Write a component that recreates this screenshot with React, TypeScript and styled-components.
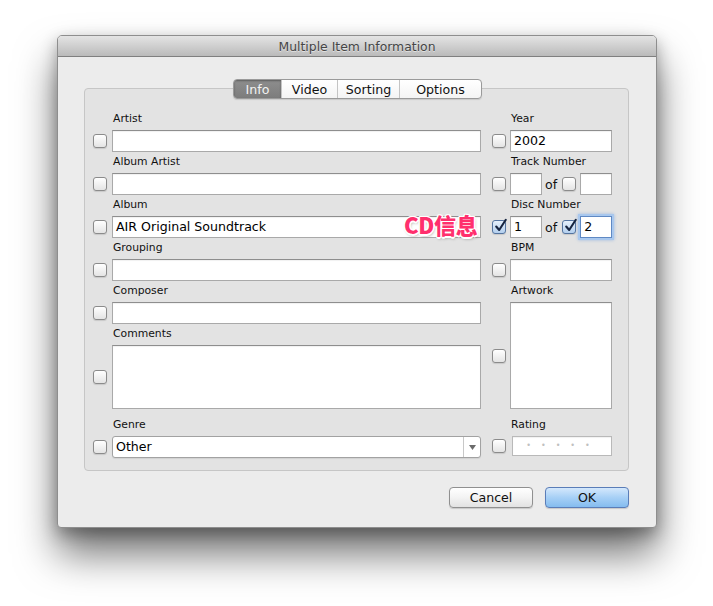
import React from "react";
import styled, { createGlobalStyle, css } from "styled-components";

const Global = createGlobalStyle`
  html, body { margin: 0; padding: 0; background: #ffffff; }
  body { font-family: "DejaVu Sans", "Liberation Sans", sans-serif; }
  * { box-sizing: border-box; }
`;

const Page = styled.div`
  width: 713px;
  height: 606px;
  padding: 35px 56px 0 57px;
  background: #ffffff;
`;

const Window = styled.div`
  width: 600px;
  height: 493px;
  display: flex;
  flex-direction: column;
  background: #ececec;
  border: 1px solid #8e8e8e;
  border-radius: 5px 5px 4px 4px;
  box-shadow: 0 26px 40px rgba(0, 0, 0, 0.55), 0 6px 16px rgba(0, 0, 0, 0.3);
`;

const TitleBar = styled.div`
  height: 21px;
  flex: none;
  border-bottom: 1px solid #7f7f7f;
  border-radius: 4px 4px 0 0;
  background: linear-gradient(#e4e4e4, #cdcdcd 55%, #bababa);
  color: #454545;
  font-size: 12.4px;
  line-height: 21px;
  text-align: center;
  text-shadow: 0 1px 0 rgba(255, 255, 255, 0.5);
`;

const Body = styled.div`
  flex: 1;
  display: flex;
  flex-direction: column;
  padding: 22px 27px 19px 26px;
`;

const TabRow = styled.div`
  display: flex;
  justify-content: center;
  position: relative;
  z-index: 1;
  height: 20px;
  padding-left: 2px;
`;

const Segmented = styled.div`
  display: flex;
  height: 20px;
  border: 1px solid #9a9a9a;
  border-radius: 4px;
  background: linear-gradient(#ffffff, #f4f4f4);
  box-shadow: 0 1px 1px rgba(0, 0, 0, 0.12);
  overflow: hidden;
`;

const Tab = styled.div<{ $w: number; $active?: boolean }>`
  width: ${(p) => p.$w}px;
  height: 100%;
  display: flex;
  align-items: center;
  justify-content: center;
  font-size: 12.6px;
  color: #111;
  border-left: 1px solid #c4c4c4;
  &:first-child { border-left: none; }
  ${(p) =>
    p.$active &&
    css`
      background: linear-gradient(#8e8e8e, #7c7c7c);
      color: #f2f2f2;
      box-shadow: inset 0 1px 2px rgba(0, 0, 0, 0.35);
      border-left: none;
    `}
`;

const Panel = styled.div`
  position: relative;
  margin-top: -11px;
  height: 383px;
  background: #e3e3e3;
  border: 1px solid #c6c6c6;
  border-radius: 4px;
  padding: 23px 15px 0 8px;
  display: flex;
  gap: 11px;
`;

const Column = styled.div<{ $w: number }>`
  width: ${(p) => p.$w}px;
  display: flex;
  flex-direction: column;
  gap: 3px;
`;

const Group = styled.div<{ $gap: number; $top?: number }>`
  display: grid;
  grid-template-columns: 14px 1fr;
  column-gap: ${(p) => p.$gap}px;
  row-gap: 4px;
  align-items: center;
  margin-top: ${(p) => p.$top ?? 0}px;
`;

const Label = styled.div`
  grid-column: 2;
  font-size: 10.8px;
  line-height: 14px;
  color: #111;
  padding-left: 1px;
`;

const Box = styled.div<{ $checked?: boolean }>`
  width: 14px;
  height: 14px;
  position: relative;
  border-radius: 3px;
  border: 1px solid #8b8b8b;
  background: linear-gradient(#ffffff, #e4e4e4);
  box-shadow: 0 1px 1px rgba(0, 0, 0, 0.12);
  ${(p) =>
    p.$checked &&
    css`
      border-color: #54749f;
      background: linear-gradient(#e6f0fb, #b3cfee);
    `}
`;

const CheckMark = styled.svg`
  position: absolute;
  left: 1px;
  top: -3px;
  width: 14px;
  height: 15px;
`;

const Checkbox = ({ checked }: { checked?: boolean }) => (
  <Box $checked={checked}>
    {checked && (
      <CheckMark viewBox="0 0 14 15">
        <path d="M2.2 8.5 L5.2 12 L11.8 1.8" fill="none" stroke="#16243f" strokeWidth="2.1" strokeLinecap="round" strokeLinejoin="round" />
      </CheckMark>
    )}
  </Box>
);

const Field = styled.div<{ $h?: number; $w?: number; $focus?: boolean; $ml?: number }>`
  height: ${(p) => p.$h ?? 22}px;
  width: ${(p) => (p.$w ? `${p.$w}px` : "auto")};
  margin-left: ${(p) => p.$ml ?? 0}px;
  background: #ffffff;
  border: 1px solid #a9a9a9;
  border-top-color: #8e8e8e;
  box-shadow: inset 0 1px 1px rgba(0, 0, 0, 0.06);
  font-size: 12.6px;
  line-height: 20px;
  color: #000;
  padding-left: 3px;
  white-space: nowrap;
  overflow: hidden;
  ${(p) =>
    p.$focus &&
    css`
      border: 1px solid #5f89c4;
      box-shadow: 0 0 0 2px #a9c8ee, 0 0 3px 2px rgba(110, 160, 225, 0.6);
    `}
`;

const Rating = styled(Field)`
  border-color: #b9b9b9;
  display: flex;
  align-items: center;
  justify-content: center;
  gap: 10px;
  color: #c0c0c0;
  font-size: 8px;
  padding: 0 8px 0 0;
`;

const Select = styled.div`
  height: 22px;
  display: flex;
  background: #ffffff;
  border: 1px solid #a2a2a2;
  border-radius: 3px;
  box-shadow: 0 1px 1px rgba(0, 0, 0, 0.08);
  font-size: 12.6px;
  line-height: 20px;
`;

const SelectValue = styled.div`
  flex: 1;
  padding-left: 3px;
`;

const SelectArrow = styled.div`
  width: 17px;
  border-left: 1px solid #c8c8c8;
  display: flex;
  align-items: center;
  justify-content: center;
`;

const Inline = styled.div`
  display: flex;
  align-items: center;
`;

const Of = styled.span`
  font-size: 12.6px;
  margin: 0 5px 0 3px;
  color: #111;
`;

const Annotation = styled.div`
  position: absolute;
  left: 319px;
  top: 121px;
  font-family: "Noto Sans CJK SC", "Noto Sans", sans-serif;
  font-weight: 900;
  font-size: 22px;
  line-height: 28px;
  letter-spacing: -0.3px;
  color: #ff2f6d;
  text-shadow: -1.5px 0 0 #fff, 1.5px 0 0 #fff, 0 -1.5px 0 #fff, 0 1.5px 0 #fff,
    -1px -1px 0 #fff, 1px 1px 0 #fff, -1px 1px 0 #fff, 1px -1px 0 #fff,
    1px 2px 3px rgba(0, 0, 0, 0.35);
`;

const Footer = styled.div`
  display: flex;
  justify-content: flex-end;
  gap: 12px;
  margin-top: 16px;
`;

const Button = styled.div<{ $primary?: boolean }>`
  width: 84px;
  height: 21px;
  border-radius: 4px;
  border: 1px solid #909090;
  background: linear-gradient(#ffffff, #f3f3f3 50%, #e2e2e2);
  box-shadow: 0 1px 1px rgba(0, 0, 0, 0.15);
  display: flex;
  align-items: center;
  justify-content: center;
  font-size: 12.6px;
  color: #111;
  ${(p) =>
    p.$primary &&
    css`
      border-color: #5a7db8;
      background: linear-gradient(#d4e8fc, #a7d0f6 50%, #84bcef);
    `}
`;

export default function App() {
  return (
    <>
      <Global />
      <Page>
        <Window>
          <TitleBar>Multiple Item Information</TitleBar>
          <Body>
            <TabRow>
              <Segmented>
                <Tab $w={47} $active>Info</Tab>
                <Tab $w={56}>Video</Tab>
                <Tab $w={62}>Sorting</Tab>
                <Tab $w={82}>Options</Tab>
              </Segmented>
            </TabRow>
            <Panel>
              <Column $w={388}>
                <Group $gap={5}>
                  <Label>Artist</Label>
                  <Checkbox />
                  <Field />
                </Group>
                <Group $gap={5}>
                  <Label>Album Artist</Label>
                  <Checkbox />
                  <Field />
                </Group>
                <Group $gap={5}>
                  <Label>Album</Label>
                  <Checkbox />
                  <Field>AIR Original Soundtrack</Field>
                </Group>
                <Group $gap={5}>
                  <Label>Grouping</Label>
                  <Checkbox />
                  <Field />
                </Group>
                <Group $gap={5}>
                  <Label>Composer</Label>
                  <Checkbox />
                  <Field />
                </Group>
                <Group $gap={5}>
                  <Label>Comments</Label>
                  <Checkbox />
                  <Field $h={64} />
                </Group>
                <Group $gap={5} $top={6}>
                  <Label>Genre</Label>
                  <Checkbox />
                  <Select>
                    <SelectValue>Other</SelectValue>
                    <SelectArrow>
                      <svg width="7" height="5" viewBox="0 0 7 5">
                        <path d="M0 0 H7 L3.5 5 Z" fill="#6b6b6b" />
                      </svg>
                    </SelectArrow>
                  </Select>
                </Group>
              </Column>
              <Column $w={120}>
                <Group $gap={4}>
                  <Label>Year</Label>
                  <Checkbox />
                  <Field>2002</Field>
                </Group>
                <Group $gap={4}>
                  <Label>Track Number</Label>
                  <Checkbox />
                  <Inline>
                    <Field $w={32} />
                    <Of>of</Of>
                    <Checkbox />
                    <Field $w={32} $ml={4} />
                  </Inline>
                </Group>
                <Group $gap={4}>
                  <Label>Disc Number</Label>
                  <Checkbox checked />
                  <Inline>
                    <Field $w={32}>1</Field>
                    <Of>of</Of>
                    <Checkbox checked />
                    <Field $w={32} $ml={4} $focus>2</Field>
                  </Inline>
                </Group>
                <Group $gap={4}>
                  <Label>BPM</Label>
                  <Checkbox />
                  <Field />
                </Group>
                <Group $gap={4}>
                  <Label>Artwork</Label>
                  <Checkbox />
                  <Field $h={107} />
                </Group>
                <Group $gap={4} $top={6}>
                  <Label>Rating</Label>
                  <Checkbox />
                  <Rating $h={20} $ml={2}>
                    <span>•</span><span>•</span><span>•</span><span>•</span><span>•</span>
                  </Rating>
                </Group>
              </Column>
              <Annotation>CD信息</Annotation>
            </Panel>
            <Footer>
              <Button>Cancel</Button>
              <Button $primary>OK</Button>
            </Footer>
          </Body>
        </Window>
      </Page>
    </>
  );
}
